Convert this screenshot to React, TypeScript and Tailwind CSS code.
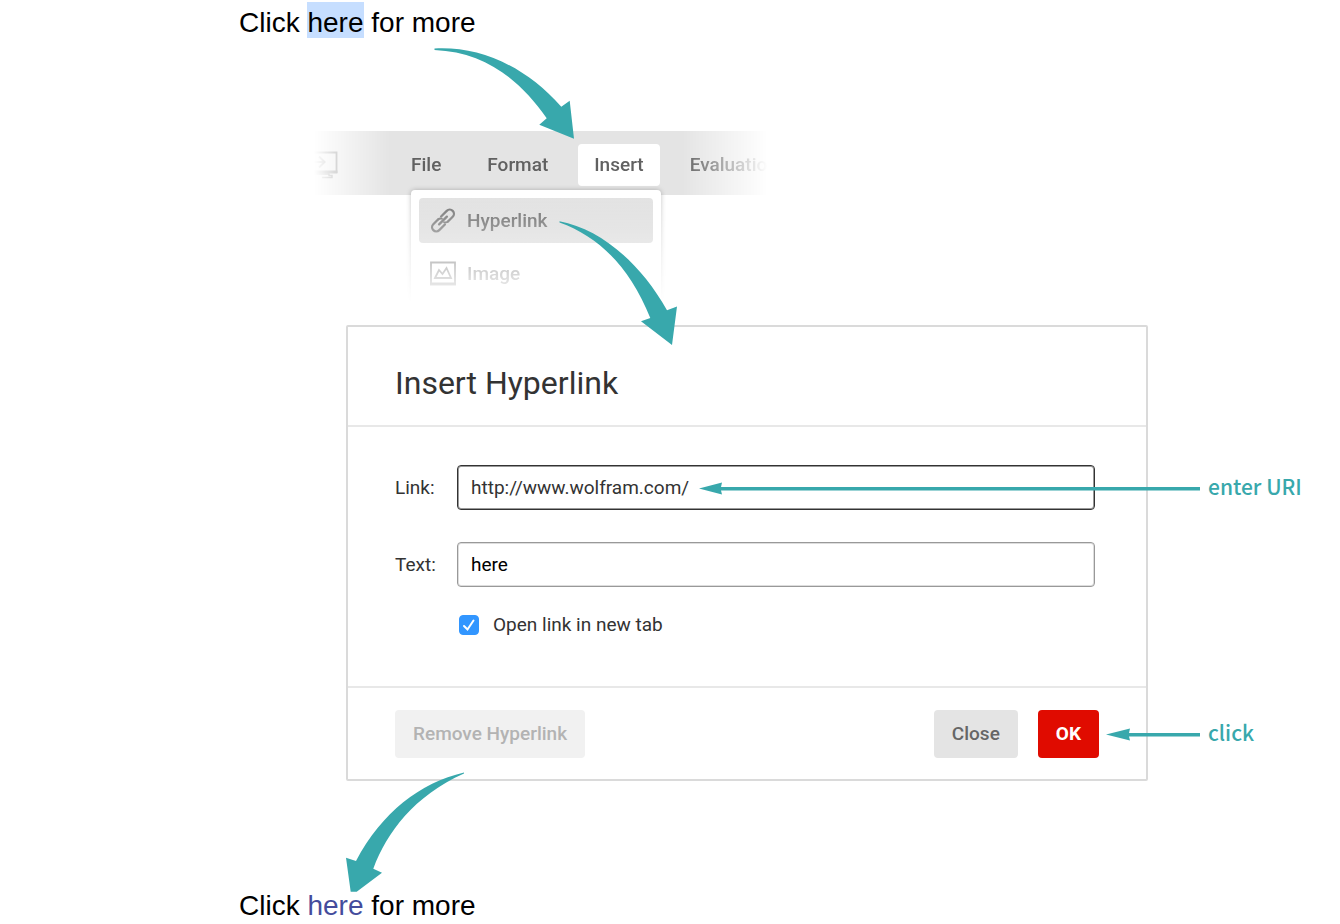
import { useState } from 'react'

const MENUS = ['File', 'Format', 'Insert', 'Evaluation']

function PresenterIcon() {
  return (
    <svg viewBox="0 0 24 28" className="h-7 w-6 shrink-0" fill="none" stroke="#777" strokeWidth="1.8">
      <path d="M0 1.5H22.5V21H0" />
      <path d="M0 19.5H23.4V22.5H0Z" fill="#777" stroke="none" />
      <path d="M0 11H10M5 5.5L10.5 11L5 16.5" strokeWidth="2" />
      <path d="M0 23H15V24.5H18V26.5H8" strokeWidth="1.4" />
    </svg>
  )
}

function LinkIcon() {
  return (
    <svg viewBox="0 0 26 26" className="size-[26px]" fill="none" stroke="#707070" strokeWidth="2.3" strokeLinecap="round">
      <g transform="translate(13 12.5) rotate(-45)">
        <path d="M-1.5 4.2H-9.5A4.2 4.2 0 0 1 -9.5 -4.2H-2.5" />
        <path d="M1.5 -4.2H9.5A4.2 4.2 0 0 1 9.5 4.2H2.5" />
        <path d="M-5.5 0H5.5" />
        <path d="M-3 -4.2A4.2 4.2 0 0 1 .5 -2M3 4.2A4.2 4.2 0 0 1 -.5 2" strokeWidth="1.8" />
      </g>
    </svg>
  )
}

function ImageIcon() {
  return (
    <svg viewBox="0 0 26 26" className="size-[26px]" fill="none" stroke="#666">
      <path d="M1 1.5H25V23H1Z" strokeWidth="1.8" />
      <path d="M0 21.5H26V24.5H0Z" fill="#666" stroke="none" />
      <path d="M5 17L9 9L12.5 13L16.5 7L21 17Z" strokeWidth="1.8" />
    </svg>
  )
}

function ClickHere({ children }: { children: React.ReactNode }) {
  return (
    <p className="text-[28px] leading-9 whitespace-nowrap text-black [font-family:'Liberation_Sans',Arial,sans-serif]">
      Click {children} for more
    </p>
  )
}

export default function App() {
  const [link, setLink] = useState('http://www.wolfram.com/')
  const [text, setText] = useState('here')
  const [newTab, setNewTab] = useState(true)

  return (
    <main className="bg-white pt-[5px] pr-[192px] pl-[239px] text-[19px] leading-6 [font-family:Roboto,sans-serif]">
      <ClickHere>
        <mark className="bg-[#c6deff] pt-[5px] text-black">here</mark>
      </ClickHere>

      {/* Menu bar, faded at both ends */}
      <section className="relative mt-[90px]">
        <nav className="ml-[75px] flex h-16 w-[480px] items-center bg-[#e4e4e4] pt-1 [mask-image:linear-gradient(to_right,transparent,black_76px,black_368px,transparent_454px)]">
          <PresenterIcon />
          <div className="ml-[57px] flex gap-3.5">
            {MENUS.map(m => (
              <button
                key={m}
                className={`h-[42px] rounded-[4px] px-4 font-medium text-[#616161] ${m === 'Insert' ? 'bg-white' : ''}`}
              >
                {m}
              </button>
            ))}
          </div>
        </nav>

        {/* Insert menu, faded towards the bottom */}
        <div className="relative -mt-[11px] ml-[166px] h-[119px] w-[262px] overflow-hidden px-1.5 pt-1.5 [mask-image:linear-gradient(to_bottom,black_10px,transparent)]">
          <div className="flex h-32 flex-col gap-2 rounded-[4px] bg-white p-2 shadow-[0_0_5px_rgba(0,0,0,0.25)]">
            <button className="flex h-[45px] shrink-0 items-center gap-[11px] rounded-[4px] bg-linear-to-b from-[#e2e2e2] to-[#d6d6d6] pl-[11px] font-medium text-[#666]">
              <LinkIcon />
              Hyperlink
            </button>
            <button className="flex h-[45px] shrink-0 items-center gap-[11px] rounded-[4px] pl-[11px] font-medium text-[#666]">
              <ImageIcon />
              Image
            </button>
          </div>
        </div>

        <svg viewBox="0 0 140 92" className="absolute -top-[84px] left-[195px] h-[92px] w-[140px]" fill="#38a8ac">
          <path d="M.5 1.5C46 -1 91 19 127.3 59.7L135.7 53.7L140 91.7L105.3 77.7L112.7 71.3C86 33 51 5 .5 3Z" />
        </svg>
        <svg viewBox="0 0 120 126" className="absolute top-[89px] left-[320px] z-10 h-[126px] w-[120px]" fill="#38a8ac">
          <path d="M.5 1.3C41 9 81 42 108 90.3L118 86.5L113 125L82 101.3L91.3 98C71 48 41 17 .5 2.5Z" />
        </svg>
      </section>

      <section className="relative mt-[22px] ml-[107px] rounded-[2px] border-2 border-[#dadada] bg-white">
        <h1 className="border-b-2 border-[#e8e8e8] px-[47px] pt-9 pb-[22px] text-[32px] leading-10 text-[#333]">
          Insert Hyperlink
        </h1>

        <form className="px-[47px] pt-[38px] pb-[49px] text-[#333]">
          <div className="relative mr-1 flex items-center">
            <label htmlFor="link" className="w-[62px]">Link:</label>
            <input
              id="link"
              value={link}
              onChange={e => setLink(e.target.value)}
              className="h-[45px] min-w-0 flex-1 rounded-[4px] border border-[#333] px-[13px] shadow-[inset_0_0_0_1px_#999]"
            />
            <div className="absolute top-0 left-[304px] flex h-full items-center gap-2 whitespace-nowrap text-[#38a8ac]">
              <svg viewBox="0 0 501 14" className="h-3.5 w-[501px]" fill="#38a8ac">
                <path d="M0 7.5L23 1.5L22 6H501V9.5H22L23 13.5Z" />
              </svg>
              <span className="pb-1 text-[21px] font-medium [font-family:'Noto_Sans_CJK_SC',sans-serif]">enter URI</span>
            </div>
          </div>

          <div className="mt-8 mr-1 flex items-center">
            <label htmlFor="text" className="w-[62px]">Text:</label>
            <input
              id="text"
              value={text}
              onChange={e => setText(e.target.value)}
              className="h-[45px] min-w-0 flex-1 rounded-[4px] border border-[#999] px-[13px] text-black shadow-[inset_0_0_0_1px_#ddd]"
            />
          </div>

          <label className="mt-[26px] ml-16 flex items-center gap-3.5">
            <span className="relative size-5">
              <input
                type="checkbox"
                checked={newTab}
                onChange={e => setNewTab(e.target.checked)}
                className="peer block size-5 appearance-none rounded-[4px] border border-[#aaa] checked:border-[#3296ff] checked:bg-[#3296ff]"
              />
              <svg viewBox="0 0 20 20" className="pointer-events-none absolute inset-0 hidden size-5 peer-checked:block" fill="none" stroke="white" strokeWidth="2" strokeLinecap="round">
                <path d="M5 11L8.5 14.5L14.5 5.5" />
              </svg>
            </span>
            Open link in new tab
          </label>
        </form>

        <footer className="relative flex items-center border-t-2 border-[#e8e8e8] px-[47px] pt-[22px] pb-[21px] font-medium">
          <button disabled className="h-12 rounded-[4px] bg-[#f1f1f1] px-[18px] text-[#b3b3b3]">Remove Hyperlink</button>
          <button className="ml-auto h-12 rounded-[4px] bg-[#e4e4e4] px-[18px] text-[#666]">Close</button>
          <button className="ml-5 h-12 rounded-[4px] bg-[#e00b00] px-[18px] font-bold text-white">OK</button>
          <div className="absolute top-[22px] left-full -ml-10 flex h-12 items-center gap-2 whitespace-nowrap text-[#38a8ac]">
            <svg viewBox="0 0 94 14" className="h-3.5 w-[94px]" fill="#38a8ac">
              <path d="M0 7.5L24 1.5L23 6H94V9.5H23L24 13.5Z" />
            </svg>
            <span className="pb-1 text-[21px] font-medium [font-family:'Noto_Sans_CJK_SC',sans-serif]">click</span>
          </div>
        </footer>

        <svg viewBox="0 0 120 120" className="absolute top-[445px] -left-0.5 size-[120px]" fill="#38a8ac">
          <path d="M118 .5C74 11 36 40 10 89L0 85.7L4.7 119.7H10.7L36 100.7L27.3 96.7C41 60 68 24 118 1.5Z" />
        </svg>
      </section>

      <div className="mt-[107px]">
        <ClickHere>
          <a href="http://www.wolfram.com/" className="text-[#444c9c]">here</a>
        </ClickHere>
      </div>
    </main>
  )
}
